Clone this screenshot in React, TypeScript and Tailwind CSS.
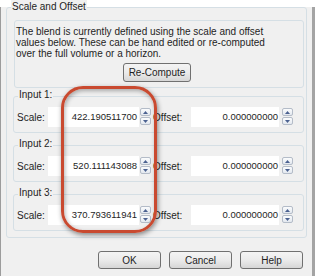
import React from "react";

const font = { fontFamily: '"Liberation Sans", Arial, sans-serif' };

function Spinner() {
  return (
    <div className="flex flex-col gap-[1px] w-[11px]">
      <div className="h-[8px] border border-[#b4bcc8] rounded-[2px] bg-gradient-to-b from-[#fbfcfd] to-[#e3e8ef] flex items-center justify-center">
        <svg width="5" height="3" viewBox="0 0 5 3"><path d="M0 3 L2.5 0 L5 3 Z" fill="#4b6190" /></svg>
      </div>
      <div className="h-[8px] border border-[#b4bcc8] rounded-[2px] bg-gradient-to-b from-[#fbfcfd] to-[#e3e8ef] flex items-center justify-center">
        <svg width="5" height="3" viewBox="0 0 5 3"><path d="M0 0 L2.5 3 L5 0 Z" fill="#4b6190" /></svg>
      </div>
    </div>
  );
}

function InputBox({ label, scale, mt }: { label: string; scale: string; mt: string }) {
  return (
    <div className={`relative ml-[6px] w-[291px] h-[37px] border border-[#d5dfe5] rounded-[3px] ${mt}`}>
      <span className="absolute -top-[8px] left-[4px] px-[1px] bg-[#f0f0f0] text-[10px] leading-[12px] text-[#1e1e1e]">{label}</span>
      <div className="flex items-start mt-[10px] pl-[3px]">
        <div className="w-[31px] h-[20px] flex items-center text-[10px] text-[#1e1e1e]">Scale:</div>
        <div className="w-[91px] h-[20px] bg-white flex items-center justify-end pr-[2px] text-[9.5px] text-[#1e1e1e]">{scale}</div>
        <div className="ml-[1px] mt-[1px]"><Spinner /></div>
        <div className="ml-[2px] w-[38px] h-[20px] flex items-center text-[10px] text-[#1e1e1e]">Offset:</div>
        <div className="w-[88px] h-[20px] bg-white flex items-center justify-end pr-[1px] text-[9.5px] text-[#1e1e1e]">0.000000000</div>
        <div className="ml-[3px] mt-[1px]"><Spinner /></div>
      </div>
    </div>
  );
}

function Btn({ children, className = "" }: { children: React.ReactNode; className?: string }) {
  return (
    <div className={`h-[18px] border border-[#707070] rounded-[3px] bg-gradient-to-b from-[#f4f4f4] via-[#ebebeb] to-[#d6d6d6] flex items-center justify-center text-[10px] text-[#1e1e1e] ${className}`}>
      {children}
    </div>
  );
}

export default function App() {
  return (
    <div className="relative w-[317px] h-[276px] bg-white overflow-hidden" style={font}>
      <div className="w-[315px] h-[275px] bg-[#f0f0f0] border-l border-b border-r-[3px] border-l-[#9c9c9c] border-b-[#9c9c9c] border-r-[#a4a4a4]">
        <div className="relative mt-[7px] ml-[5px] w-[301px] h-[231px] border border-[#d5dfe5] rounded-[3px]">
          <span className="absolute -top-[8px] left-[4px] px-[1px] bg-[#f0f0f0] text-[10px] leading-[14px] text-[#1e1e1e]">Scale and Offset</span>
          <div className="mt-[12px] ml-[7px] w-[290px] h-[68px] border border-[#d5dfe5] rounded-[3px] flex flex-col">
            <div className="pt-[5px] pl-[1px] text-[10px] leading-[11px] text-[#1e1e1e]">
              The blend is currently defined using the scale and offset<br />
              values below. These can be hand edited or re-computed<br />
              over the full volume or a horizon.
            </div>
            <div className="flex justify-center mt-[4px] pr-[4px]">
              <Btn className="w-[68px] h-[19px]">Re-Compute</Btn>
            </div>
          </div>
          <InputBox label="Input 1:" scale="422.190511700" mt="mt-[8px]" />
          <InputBox label="Input 2:" scale="520.111143088" mt="mt-[12px]" />
          <InputBox label="Input 3:" scale="370.793611941" mt="mt-[12px]" />
        </div>
        <div className="flex mt-[13px] ml-[97px] gap-[8px]">
          <Btn className="w-[63px]">OK</Btn>
          <Btn className="w-[63px]">Cancel</Btn>
          <Btn className="w-[63px]">Help</Btn>
        </div>
      </div>
      <div className="absolute left-[61px] top-[86px] w-[96px] h-[147px] border-[3px] border-[#c94a30] rounded-[22px] shadow-[1px_2px_5px_rgba(0,0,0,0.45),inset_1px_2px_4px_rgba(0,0,0,0.3)]" />
    </div>
  );
}
